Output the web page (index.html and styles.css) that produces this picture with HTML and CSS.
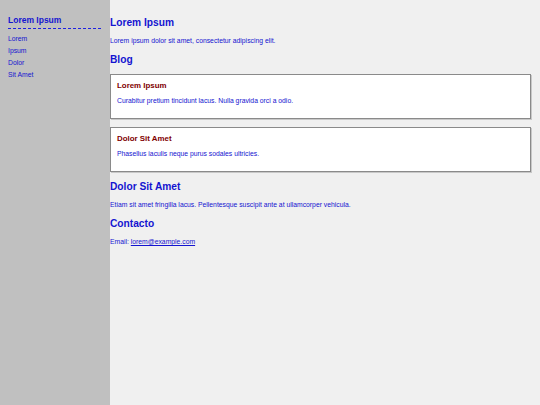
FILE: index.html
```html
<!DOCTYPE html>
<html>
<head>
<meta charset="utf-8">
<link rel="stylesheet" href="styles.css">
</head>
<body>
<div class="layout">
  <aside class="sidebar">
    <div class="side-title">Lorem Ipsum</div>
    <ul class="side-links">
      <li>Lorem</li>
      <li>Ipsum</li>
      <li>Dolor</li>
      <li>Sit Amet</li>
    </ul>
  </aside>
  <main class="main">
    <h2 class="heading">Lorem Ipsum</h2>
    <p class="text">Lorem ipsum dolor sit amet, consectetur adipiscing elit.</p>
    <h2 class="heading">Blog</h2>
    <div class="card">
      <h3 class="card-title">Lorem Ipsum</h3>
      <p class="card-text">Curabitur pretium tincidunt lacus. Nulla gravida orci a odio.</p>
    </div>
    <div class="card">
      <h3 class="card-title">Dolor Sit Amet</h3>
      <p class="card-text">Phasellus iaculis neque purus sodales ultricies.</p>
    </div>
    <h2 class="heading">Dolor Sit Amet</h2>
    <p class="text">Etiam sit amet fringilla lacus. Pellentesque suscipit ante at ullamcorper vehicula.</p>
    <h2 class="heading">Contacto</h2>
    <p class="text">Email: <a class="mail" href="#">lorem@example.com</a></p>
  </main>
</div>
</body>
</html>
```
FILE: styles.css
```css
html, body {
  margin: 0;
  padding: 0;
  height: 100%;
}
body {
  background: #f0f0f0;
  font-family: "Liberation Sans", Arial, sans-serif;
  color: #1414d0;
}
.layout {
  display: flex;
  min-height: 100vh;
}
.sidebar {
  width: 110px;
  flex: none;
  background: #c0c0c0;
  padding: 14px 9px 0 8px;
  box-sizing: border-box;
}
.side-title {
  font-size: 8.5px;
  font-weight: bold;
  line-height: 12px;
  padding-bottom: 2px;
  border-bottom: 1px dashed #2020e0;
}
.side-links {
  list-style: none;
  margin: 4px 0 0;
  padding: 0;
}
.side-links li {
  font-size: 6.8px;
  line-height: 12px;
}
.main {
  flex: 1;
  padding: 16px 9px 0 0;
}
.heading {
  margin: 0 0 8px;
  font-size: 10.2px;
  line-height: 13px;
  font-weight: bold;
}
.text {
  margin: 0 0 8px;
  font-size: 6.8px;
  line-height: 8px;
}
.mail {
  color: #1414d0;
}
.card {
  background: #fff;
  border: 1px solid #8a8a8a;
  box-shadow: 1px 1px 0 #c8c8c8;
  padding: 6px 6px 6px 6px;
  margin: 0 0 8px;
}
.card-title {
  margin: 0 0 6px;
  font-size: 7.9px;
  line-height: 10px;
  font-weight: bold;
  color: #800000;
}
.card-text {
  margin: 0 0 7px;
  font-size: 6.8px;
  line-height: 8px;
}
```
